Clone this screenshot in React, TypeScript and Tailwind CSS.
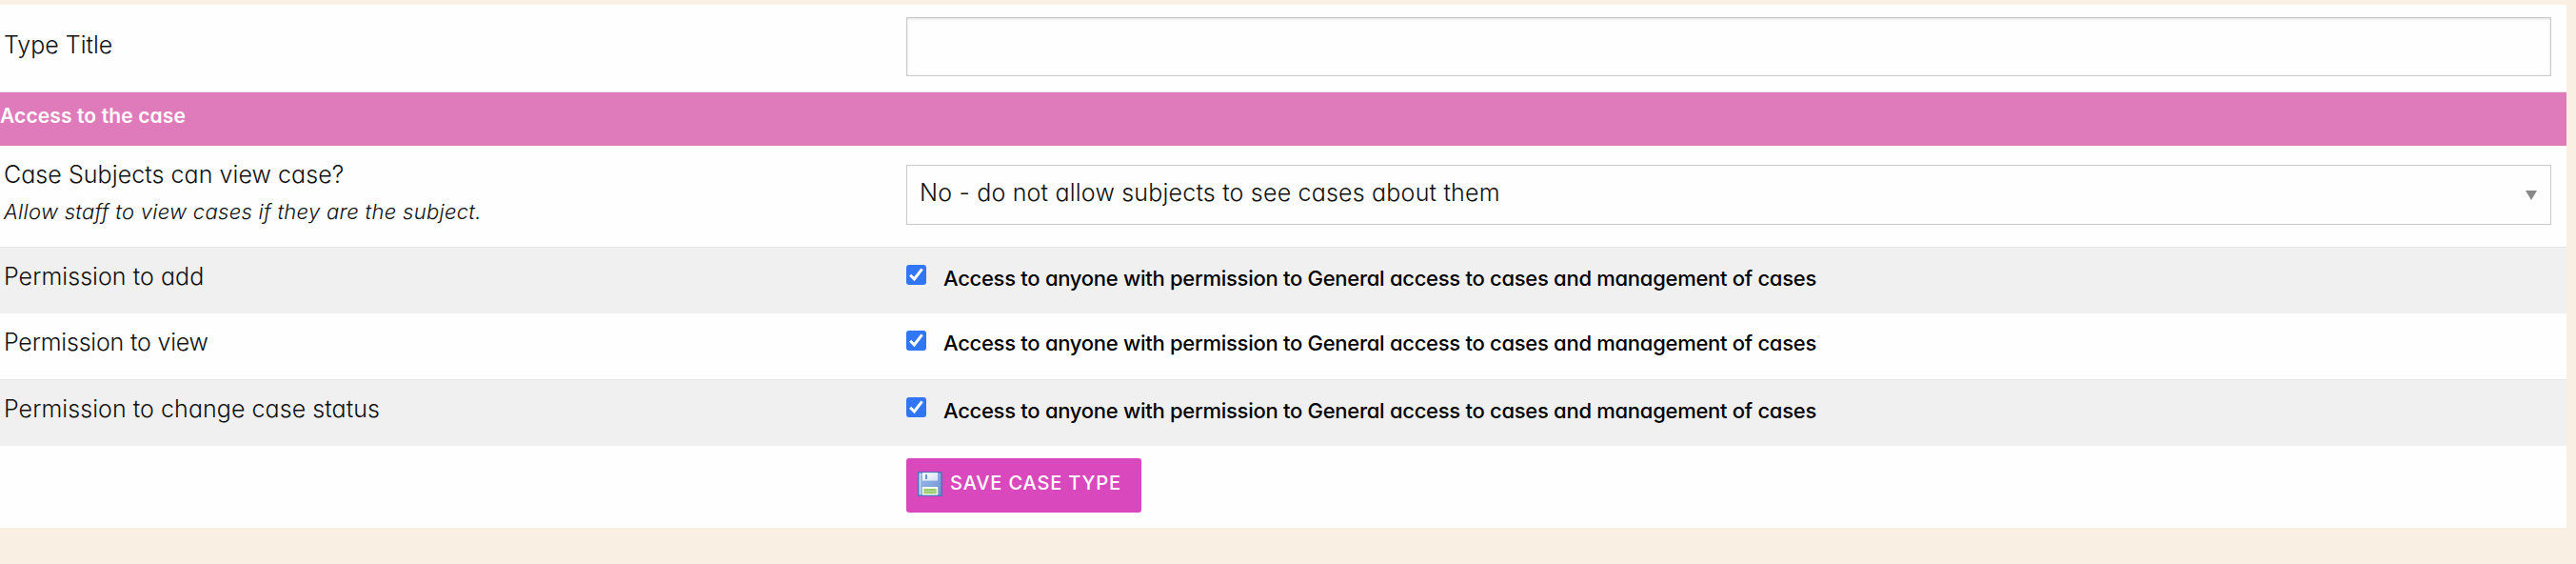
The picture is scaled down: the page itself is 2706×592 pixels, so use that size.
import clsx from "clsx";

const permissions = [
  { label: "Permission to add", tracking: "tracking-[0.05px]" },
  { label: "Permission to view", tracking: "tracking-[-0.2px]" },
  { label: "Permission to change case status", tracking: "tracking-[0.06px]" },
];

function Checkbox({ className }: { className?: string }) {
  return (
    <span className={clsx("size-[21px] rounded-[3px] bg-[#3176f6]", className)}>
      <svg className="size-[21px]" viewBox="0 0 21 21" fill="none">
        <path d="M4.2 10.8L8.4 15L16.6 4.4" stroke="#fff" strokeWidth="3" />
      </svg>
    </span>
  );
}

function DiskIcon() {
  return (
    <svg className="size-[26px]" viewBox="0 0 26 26">
      <defs>
        <linearGradient id="disk" x1="0" y1="0" x2="1" y2="1">
          <stop offset="0" stopColor="#9dbbea" />
          <stop offset="1" stopColor="#6f93d4" />
        </linearGradient>
        <linearGradient id="shutter" x1="0" y1="0" x2="1" y2="1">
          <stop offset="0" stopColor="#ffffff" />
          <stop offset="1" stopColor="#d3def2" />
        </linearGradient>
      </defs>
      <path d="M0 0H24.5L26 1.5V26H0Z" fill="#4f72b8" />
      <path d="M1.6 1.6H23.6L24.4 2.4V24.4H1.6Z" fill="url(#disk)" />
      <path d="M1.6 1.6H3.2V24.4H1.6Z" fill="#c9dbf6" />
      <rect x="5" y="1.2" width="16" height="8.4" fill="url(#shutter)" />
      <rect x="8" y="3" width="2" height="5" fill="#6f8fc9" />
      <rect x="4.8" y="16" width="16.4" height="8.6" fill="#f5faf0" />
      <rect x="6.4" y="18" width="13.2" height="5.2" fill="#9bcb6d" />
      <rect x="6.4" y="20.2" width="13.2" height="1" fill="#b9dc95" />
    </svg>
  );
}

export default function App() {
  return (
    <div className="min-h-[592px] bg-[#f9f0e3] pt-[5px] pr-2.5 font-[Inter,sans-serif] text-[25px]/8 font-light text-[#111] [font-feature-settings:'cv11','ss03']">
      <form className="bg-[#fefefe]">
        <div className="flex h-[92px] border-b border-[#e4e4e4]">
          <label className="w-[952px] pt-[26px] pl-1">Type Title</label>
          <div className="flex-1 pt-[13px] pr-4">
            <input
              type="text"
              className="block h-[62px] w-full border border-[#c8c8c8] bg-[#fefefe] shadow-[inset_0_1px_3px_rgba(0,0,0,0.12)]"
            />
          </div>
        </div>

        <h2 className="h-14 bg-[#df7bbb] pt-[9px] text-[21px]/8 font-semibold tracking-[0.12px] text-white">
          Access to the case
        </h2>

        <div className="flex h-[106px]">
          <div className="w-[952px] pt-3.5 pl-1">
            <label className="block tracking-[0.06px]">Case Subjects can view case?</label>
            <em className="mt-[7px] block text-[22px]/8 tracking-[0.3px]">
              Allow staff to view cases if they are the subject.
            </em>
          </div>
          <div className="flex-1 pt-5 pr-4">
            <button
              type="button"
              className="flex h-[63px] w-full items-center justify-between border border-[#c8c8c8] pr-3.5 pb-[5px] pl-[13px]"
            >
              <span className="tracking-[0.2px]">No - do not allow subjects to see cases about them</span>
              <svg className="mt-[5px] h-2.5 w-3" viewBox="0 0 12 10">
                <path d="M0 0H12L6 10Z" fill="#888" />
              </svg>
            </button>
          </div>
        </div>

        {permissions.map(({ label, tracking }, i) => (
          <div
            key={label}
            className={clsx("flex", i % 2 === 0 ? "h-[70px] bg-[#f0f0f0] shadow-[inset_0_1px_0_#e6e6e6]" : "h-[69px]")}
          >
            <label className={clsx("w-[952px] pl-1", i % 2 === 0 ? "pt-[15px]" : "pt-3.5", tracking)}>{label}</label>
            <Checkbox className={i % 2 === 0 ? "mt-[19px]" : "mt-[18px]"} />
            <span
              className={clsx(
                "ml-[18px] text-[22px]/8 font-medium tracking-[-0.28px] text-black",
                i % 2 === 0 ? "pt-[17px]" : "pt-[15px]",
              )}
            >
              Access to anyone with permission to General access to cases and management of cases
            </span>
          </div>
        ))}

        <div className="h-[86px] pt-[13px] pl-[952px]">
          <button
            type="submit"
            className="flex h-[57px] w-[247px] items-start rounded-[3px] bg-[#d948bd] pt-3.5 pl-3 text-xl/8 font-medium tracking-[0.85px] whitespace-nowrap text-white"
          >
            <DiskIcon />
            <span className="-mt-1 ml-2">SAVE CASE TYPE</span>
          </button>
        </div>
      </form>
    </div>
  );
}
